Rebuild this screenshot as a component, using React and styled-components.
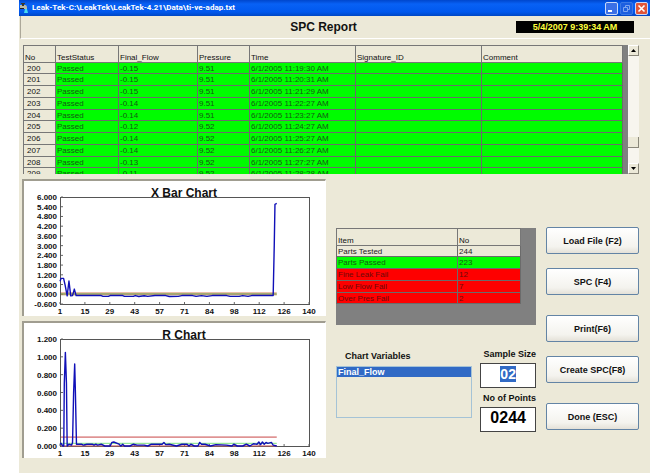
import React, { useEffect, useRef } from "react";
import styled, { createGlobalStyle, css } from "styled-components";

const GlobalStyle = createGlobalStyle`
  * { box-sizing: border-box; }
  body {
    margin: 0;
    background: #fff;
    font-family: "Liberation Sans", Arial, sans-serif;
    font-size: 8px;
    color: #111;
  }
  button, input, select { font-family: inherit; }
`;

const Window = styled.div`
  margin-left: 19px;
  min-height: 100vh;
  background: #ece9d8;
  display: flex;
  flex-direction: column;
`;

const TitleBar = styled.header`
  height: 16px;
  display: flex;
  align-items: center;
  gap: 3px;
  padding: 0 2px 0 1px;
  background: linear-gradient(#0046cc, #0861f5 25%, #0058ee 75%, #0047c4);
  color: #fff;
`;

const TitleText = styled.span`
  flex: 1;
  font-family: Roboto, sans-serif;
  font-size: 8px;
  font-weight: 700;
  line-height: 14px;
  white-space: nowrap;
`;

const WindowButtons = styled.div`
  display: flex;
  gap: 2px;
`;

const WindowButton = styled.button`
  width: 13px;
  height: 13px;
  padding: 0;
  border: 1px solid ${(p) => (p.$dim ? "#3a78e4" : "#c8d8f8")};
  border-radius: 2px;
  background: ${(p) => (p.$close ? "#e0563a" : p.$dim ? "#1c5fe0" : "#3b70e6")};
  display: flex;
  svg { width: 11px; height: 11px; }
`;

const ReportHeader = styled.div`
  height: 23px;
  margin-left: 1px;
  display: grid;
  grid-template-columns: 255fr auto 277fr;
  align-items: center;
  padding: 0 16px 0 14px;
  border-left: 1px solid #aca899;
  border-bottom: 1px solid #fff;
`;

const ReportTitle = styled.h1`
  grid-column: 2;
  margin: 0;
  font-size: 12px;
  line-height: 16px;
`;

const Clock = styled.time`
  justify-self: end;
  width: 118px;
  height: 12px;
  background: #000;
  color: #ffff3c;
  font-size: 9px;
  font-weight: 700;
  line-height: 12px;
  text-align: center;
`;

const Content = styled.main`
  padding: 6px 11px 0 3px;
  display: flex;
  flex-direction: column;
  gap: 5px;
`;

const GridPane = styled.section`
  height: 129px;
  margin-left: 1px;
  display: flex;
  overflow: hidden;
`;

const GridViewport = styled.div`
  flex: 1;
  padding-right: 5px;
  background: #808080;
  overflow: hidden;
`;

const DataTable = styled.table`
  width: 100%;
  table-layout: fixed;
  border-collapse: separate;
  border-spacing: 0;
  line-height: 9px;
  text-align: left;
`;

const HeadCell = styled.th`
  width: ${(p) => p.$width};
  height: 18px;
  padding: 0 1px;
  vertical-align: bottom;
  font-weight: 400;
  background: #ece9d8;
  border: 1px solid #777;
  border-width: 1px 1px 1px 0;
  &:first-child { border-left-width: 1px; }
`;

const tones = {
  plain: css`background: #ece9d8; color: #222;`,
  pass: css`background: #00fc00; color: #145a14;`,
  fail: css`background: #fe0000; color: #6d0808;`,
};

const Row = styled.tr`
  height: 12px;
  &:nth-child(4n + 1) { height: 11px; }
`;

const Cell = styled.td`
  padding: 0 1px;
  border: 1px solid #6b6b6b;
  border-width: 0 1px 1px 0;
  white-space: nowrap;
  overflow: hidden;
  ${(p) => tones[p.$tone]}
  &:first-child { border-left-width: 1px; }
`;

const RowNumber = styled.th`
  padding: 0 3px;
  border: 1px solid #777;
  border-width: 0 1px 1px 1px;
  background: #ece9d8;
  font-weight: 400;
`;

const ScrollTrack = styled.div`
  width: 11px;
  display: flex;
  flex-direction: column;
  background: #f7f5ee;
`;

const ScrollButton = styled.button`
  width: 11px;
  height: 11px;
  padding: 0;
  display: flex;
  background: #ece9d8;
  border: 1px solid #fff;
  border-right-color: #8a877a;
  border-bottom-color: #8a877a;
`;

const ScrollSpace = styled.div`
  flex: ${(p) => p.$share};
`;

const ScrollThumb = styled.div`
  height: 11px;
  background: #ece9d8;
  border-right: 1px solid #8a877a;
  border-bottom: 1px solid #8a877a;
`;

const Lower = styled.div`
  display: grid;
  grid-template-columns: 304fr 200fr 93fr;
  column-gap: 10px;
`;

const Charts = styled.section`
  display: flex;
  flex-direction: column;
  gap: 5px;
`;

const ChartPanel = styled.div`
  background: #fff;
  border-top: 2px solid #a09d90;
  border-left: 2px solid #a09d90;
  border-right: 1px solid #fff;
  svg {
    display: block;
    width: 100%;
    height: auto;
  }
`;

const Middle = styled.section`
  padding-top: 49px;
  display: flex;
  flex-direction: column;
`;

const Summary = styled.div`
  height: 97px;
  padding-right: 15px;
  background: #808080;
`;

const Settings = styled.div`
  display: grid;
  grid-template-columns: 137fr 56fr;
  column-gap: 8px;
  padding-top: 22px;
`;

const Field = styled.div`
  display: flex;
  flex-direction: column;
`;

const Label = styled.label`
  font-size: 9px;
  font-weight: 700;
  line-height: 12px;
  white-space: nowrap;
  padding: ${(p) => (p.$list ? "3px 0 4px 9px" : "1px 0 3px 0")};
  align-self: ${(p) => (p.$list ? "flex-start" : "flex-end")};
`;

const VariableList = styled.select`
  height: 52px;
  padding: 0;
  border: 1px solid #a5c3d6;
  border-radius: 0;
  outline: 0;
  background: #ece9d8;
  font-size: 9px;
  overflow: hidden;
  option {
    min-height: 10px;
    padding: 0 1px;
    font-weight: 700;
    line-height: 10px;
  }
  option:checked {
    background: #316ac5 linear-gradient(#316ac5, #316ac5);
    color: #fff;
  }
`;

const Fields = styled.div`
  display: flex;
  flex-direction: column;
  gap: 3px;
`;

const NumberBox = styled.input`
  width: 100%;
  height: 25px;
  padding: 0 0 4px;
  border: 1px solid #444;
  border-radius: 0;
  outline: 0;
  background: #fff;
  color: #000;
  font-size: ${(p) => (p.$large ? "16px" : "14px")};
  font-weight: 700;
  text-align: center;
  &::selection { background: #316ac5; color: #fff; }
`;

const Actions = styled.nav`
  padding-top: 48px;
  display: flex;
  flex-direction: column;
`;

const ActionButton = styled.button`
  height: 27px;
  margin-bottom: 14px;
  padding: 0;
  border: 1px solid #6384a5;
  border-radius: 2px;
  background: linear-gradient(#fff, #f4f3ee 75%, #e4e1d8);
  color: #111;
  font-size: 9px;
  font-weight: 700;
  &:nth-child(even) { margin-bottom: 20px; }
`;

const columns = [
  ["No", "33px"],
  ["TestStatus", "63px"],
  ["Final_Flow", "79px"],
  ["Pressure", "52px"],
  ["Time", "106px"],
  ["Signature_ID", "126px"],
  ["Comment", "auto"],
];

const readings = [
  [200, "-0.15", "9.51", "11:19:30"],
  [201, "-0.15", "9.51", "11:20:31"],
  [202, "-0.15", "9.51", "11:21:29"],
  [203, "-0.14", "9.51", "11:22:27"],
  [204, "-0.14", "9.51", "11:23:27"],
  [205, "-0.12", "9.52", "11:24:27"],
  [206, "-0.14", "9.52", "11:25:27"],
  [207, "-0.14", "9.52", "11:26:27"],
  [208, "-0.13", "9.52", "11:27:27"],
  [209, "-0.11", "9.52", "11:28:28"],
];

const summary = [
  ["Parts Tested", 244, "plain"],
  ["Parts Passed", 223, "pass"],
  ["Fine Leak Fail", 12, "fail"],
  ["Low Flow Fail", 7, "fail"],
  ["Over Pres Fail", 2, "fail"],
];

const xTicks = [1, 15, 29, 43, 57, 71, 84, 98, 112, 126, 140];

const xBarPoints = [
  [1, 0.8], [1.6, 0.98], [3, 0.98], [3.8, 0.6], [5, -0.1], [6, 0.82], [7, -0.1],
  [8, -0.08], [9, 0.32], [10, -0.08], [24, -0.08], [25, -0.13], [28, -0.13],
  [29, -0.08], [36, -0.08], [37, -0.13], [42, -0.13], [43, -0.08], [45, -0.14],
  [48, -0.09], [50, -0.13], [54, -0.08], [60, -0.08], [62, -0.14], [67, -0.13],
  [69, -0.08], [75, -0.08], [77, -0.13], [80, -0.08], [83, -0.13], [86, -0.08],
  [94, -0.08], [96, -0.13], [101, -0.13], [103, -0.08], [106, -0.13], [108, -0.08],
  [120, -0.08], [120.6, 3], [121, 5.55], [122, 5.6],
];

const rPoints = [
  [1, 0.02], [1.6, 0.03], [2.6, 0], [3.1, 0], [3.4, 0.7], [4, 1.05], [4.6, 0.7],
  [5, 0], [6, 0.02], [7.5, 0.01], [8, 0.04], [8.6, 0.6], [9.2, 0.92], [9.6, 0.6],
  [10.2, 0.02], [13, 0.02], [14, 0.01], [16, 0.02], [19, 0.02], [20, 0.01],
  [21, 0.02], [22, 0.01], [24, 0.02], [26, 0], [29, 0], [30, 0.04], [31, 0.045],
  [34, 0.02], [35, 0], [36, 0.02], [37, 0], [40, 0], [42, 0.02], [44, 0.01],
  [48, 0.01], [50, 0], [52, 0.02], [58, 0.02], [59, 0.04], [60, 0.015],
  [62, 0.02], [66, 0], [69, 0.02], [72, 0.02], [73, 0], [74, 0.02], [76, 0],
  [78, 0], [79, 0.04], [80, 0.02], [82, 0.02], [85, 0], [88, 0.015],
  [94, 0.01], [97, 0], [98, 0.02], [100, 0], [103, 0], [105, 0.02], [107, 0],
  [109, 0.025], [111, 0.02], [112, 0.045], [113, 0.015], [114, 0.045],
  [115, 0.02], [116, 0.04], [117, 0.03], [119, 0.04], [120, 0.01], [122, 0],
];

const plot = { left: 36, right: 285, top: 16, bottom: 123 };

function Chart({ title, min, max, step, points, limits }) {
  const px = (v) => plot.left + ((v - 1) / 139) * (plot.right - plot.left);
  const py = (v) => plot.bottom - ((v - min) / (max - min)) * (plot.bottom - plot.top);
  const yTicks = [];
  for (let v = min; v < max + step / 2; v += step) yTicks.push(v);
  const font = { fontFamily: "Liberation Sans, Arial, sans-serif", fontWeight: 700 };
  return (
    <ChartPanel>
      <svg viewBox="0 0 301 135" role="img" aria-label={title}>
        <rect x="36.5" y="16.5" width="249" height="107" fill="none" stroke="#555" />
        <text x="160" y="16" fontSize="12" textAnchor="middle" fill="#111" {...font}>{title}</text>
        {yTicks.map((v) => (
          <g key={v}>
            <line x1="37" x2="39" y1={py(v)} y2={py(v)} stroke="#666" />
            <text x="33" y={py(v) + 3} fontSize="8" textAnchor="end" fill="#111" {...font}>
              {(Math.abs(v) < 0.001 ? 0 : v).toFixed(3)}
            </text>
          </g>
        ))}
        {xTicks.map((v, i) => {
          const x = plot.left + (i * (plot.right - plot.left)) / 10;
          return (
            <g key={v}>
              <line x1={x} x2={x} y1="121" y2="123" stroke="#666" />
              <text x={x} y="133" fontSize="8" textAnchor="middle" fill="#111" {...font}>{v}</text>
            </g>
          );
        })}
        {limits.map(([v, color]) => (
          <line key={v} x1="37" x2={px(122)} y1={py(v)} y2={py(v)} stroke={color} />
        ))}
        <polyline
          points={points.map(([x, y]) => `${px(x)},${py(y)}`).join(" ")}
          fill="none"
          stroke="#1010b8"
          strokeWidth="1.4"
          strokeLinejoin="round"
        />
      </svg>
    </ChartPanel>
  );
}

function FaucetIcon() {
  return (
    <svg width="9" height="12" viewBox="0 0 9 12" aria-hidden="true">
      <path d="M0 3h5q2 0 2 3v1H4V6H0z" fill="#b9b9a8" />
      <path d="M1 1h4v1H4v2H2V2H1z" fill="#3a3a2c" />
      <path d="M0 6h4v1H0z" fill="#222" />
      <path d="M5 7h2l1 4H4z" fill="#46dcf0" />
    </svg>
  );
}

export default function App() {
  const sampleRef = useRef(null);
  useEffect(() => {
    sampleRef.current.focus();
    sampleRef.current.select();
  }, []);

  return (
    <>
      <GlobalStyle />
      <Window>
        <TitleBar>
          <FaucetIcon />
          <TitleText>Leak-Tek-C:\LeakTek\LeakTek-4.21\Data\ti-ve-adap.txt</TitleText>
          <WindowButtons>
            <WindowButton aria-label="Minimize">
              <svg viewBox="0 0 11 11"><path d="M2 7h4v2H2z" fill="#fff" /></svg>
            </WindowButton>
            <WindowButton $dim aria-label="Restore">
              <svg viewBox="0 0 11 11">
                <path d="M4.5 4V2.5h4v4H7M2.5 4.5h4v4h-4z" fill="none" stroke="#7ea6f0" />
              </svg>
            </WindowButton>
            <WindowButton $close aria-label="Close">
              <svg viewBox="0 0 11 11"><path d="M2.5 2.5l6 6m0-6l-6 6" stroke="#fff" strokeWidth="1.6" /></svg>
            </WindowButton>
          </WindowButtons>
        </TitleBar>

        <ReportHeader>
          <ReportTitle>SPC Report</ReportTitle>
          <Clock>5/4/2007 9:39:34 AM</Clock>
        </ReportHeader>

        <Content>
          <GridPane>
            <GridViewport>
              <DataTable>
                <thead>
                  <tr>
                    {columns.map(([name, width]) => (
                      <HeadCell key={name} $width={width} scope="col">{name}</HeadCell>
                    ))}
                  </tr>
                </thead>
                <tbody>
                  {readings.map(([no, flow, pressure, time]) => (
                    <Row key={no}>
                      <RowNumber scope="row">{no}</RowNumber>
                      <Cell $tone="pass">Passed</Cell>
                      <Cell $tone="pass">{flow}</Cell>
                      <Cell $tone="pass">{pressure}</Cell>
                      <Cell $tone="pass">6/1/2005 {time} AM</Cell>
                      <Cell $tone="pass" />
                      <Cell $tone="pass" />
                    </Row>
                  ))}
                </tbody>
              </DataTable>
            </GridViewport>
            <ScrollTrack>
              <ScrollButton aria-label="Scroll up">
                <svg viewBox="0 0 9 9"><path d="M2 6h5L4.5 3z" /></svg>
              </ScrollButton>
              <ScrollSpace $share={81} />
              <ScrollThumb />
              <ScrollSpace $share={15} />
              <ScrollButton aria-label="Scroll down">
                <svg viewBox="0 0 9 9"><path d="M2 3h5L4.5 6z" /></svg>
              </ScrollButton>
            </ScrollTrack>
          </GridPane>

          <Lower>
            <Charts>
              <Chart
                title="X Bar Chart"
                min={-0.6}
                max={6}
                step={0.6}
                points={xBarPoints}
                limits={[[0.09, "#e0a080"], [0.03, "#7f9a4a"], [-0.03, "#a08a50"]]}
              />
              <Chart
                title="R Chart"
                min={0}
                max={1.2}
                step={0.2}
                points={rPoints}
                limits={[[0.1, "#c84646"], [0.03, "#7fe07f"], [0.001, "#d06060"]]}
              />
            </Charts>

            <Middle>
              <Summary>
                <DataTable>
                  <thead>
                    <tr>
                      <HeadCell $width="66%" scope="col">Item</HeadCell>
                      <HeadCell $width="34%" scope="col">No</HeadCell>
                    </tr>
                  </thead>
                  <tbody>
                    {summary.map(([item, count, tone]) => (
                      <Row key={item}>
                        <Cell $tone={tone}>{item}</Cell>
                        <Cell $tone={tone}>{count}</Cell>
                      </Row>
                    ))}
                  </tbody>
                </DataTable>
              </Summary>
              <Settings>
                <Field>
                  <Label $list htmlFor="variables">Chart Variables</Label>
                  <VariableList id="variables" size={4} defaultValue="Final_Flow">
                    <option>Final_Flow</option>
                  </VariableList>
                </Field>
                <Fields>
                  <Field>
                    <Label htmlFor="sample">Sample Size</Label>
                    <NumberBox id="sample" ref={sampleRef} defaultValue="02" />
                  </Field>
                  <Field>
                    <Label htmlFor="points">No of Points</Label>
                    <NumberBox id="points" $large defaultValue="0244" />
                  </Field>
                </Fields>
              </Settings>
            </Middle>

            <Actions>
              <ActionButton>Load File (F2)</ActionButton>
              <ActionButton>SPC (F4)</ActionButton>
              <ActionButton>Print(F6)</ActionButton>
              <ActionButton>Create SPC(F8)</ActionButton>
              <ActionButton>Done (ESC)</ActionButton>
            </Actions>
          </Lower>
        </Content>
      </Window>
    </>
  );
}
